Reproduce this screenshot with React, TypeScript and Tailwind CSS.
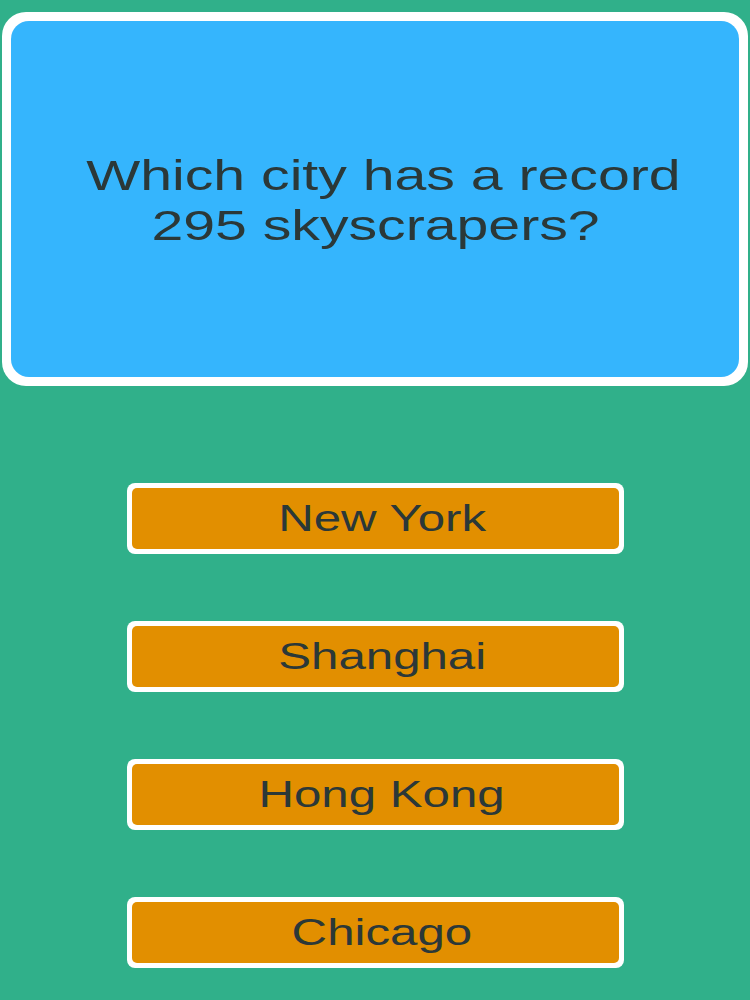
import React from "react";

const answers = ["New York", "Shanghai", "Hong Kong", "Chicago"];

export default function App() {
  return (
    <div
      className="w-[750px] h-[1000px] bg-[#30b08a] flex flex-col items-center overflow-hidden"
      style={{ fontFamily: '"Liberation Sans", Arial, sans-serif' }}
    >
      <div className="mt-[12px] w-[746px] h-[374px] rounded-[24px] bg-white p-[9px]">
        <div className="w-full h-full rounded-[18px] bg-[#35b5fd] flex items-center justify-center pt-[2px] pl-[16px]">
          <p className="text-[43px] leading-[50px] text-[#2b3838] text-center scale-x-[1.33] whitespace-nowrap">
            Which city has a record
            <br />
            295 skyscrapers?{"\u00a0"}
          </p>
        </div>
      </div>
      <div className="mt-[97px] flex flex-col gap-[67px]">
        {answers.map((a) => (
          <div
            key={a}
            className="w-[497px] h-[71px] rounded-[8px] bg-white p-[5px]"
          >
            <div className="w-full h-full rounded-[5px] bg-[#e28f00] flex items-center justify-center pl-[14px]">
              <span className="text-[37px] text-[#2b3838] leading-none scale-x-[1.33] whitespace-nowrap">
                {a}
              </span>
            </div>
          </div>
        ))}
      </div>
    </div>
  );
}
